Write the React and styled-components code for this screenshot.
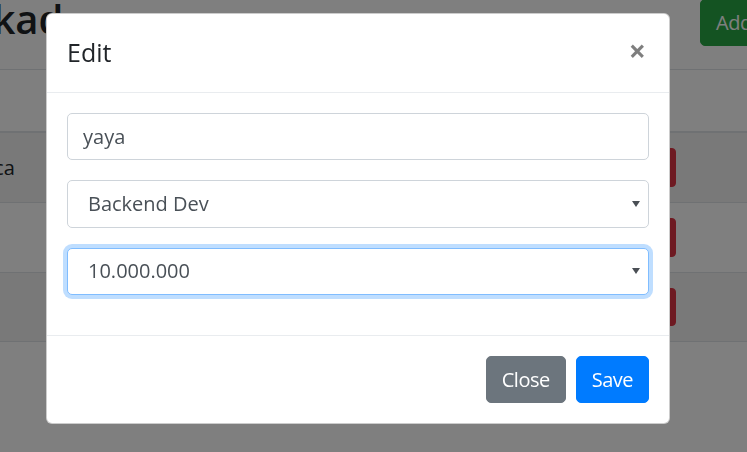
import React from 'react';
import styled, { createGlobalStyle, css } from 'styled-components';

const GlobalStyle = createGlobalStyle`
  html, body {
    margin: 0;
    padding: 0;
    background: #fff;
    overflow: hidden;
  }
  body {
    font-family: "Open Sans", "Noto Sans", "Liberation Sans", sans-serif;
    font-size: 20px;
    line-height: 1.5;
    color: #212529;
  }
  * {
    box-sizing: border-box;
  }
`;

const colors = {
  primary: '#007bff',
  secondary: '#6c757d',
  success: '#28a745',
  danger: '#dc3545',
  warning: '#ffc107',
};

const employees = [
  { name: 'Angelica', job: 'Frontend Dev', salary: '8.000.000' },
  { name: 'yaya', job: 'Backend Dev', salary: '10.000.000' },
  { name: 'budi', job: 'UI Designer', salary: '7.500.000' },
];

export default function App() {
  return (
    <>
      <GlobalStyle />
      <Page>
        <TopBar>
          <Heading>Data Akad</Heading>
          <Button $variant="success" $top>Add Data</Button>
        </TopBar>
        <Table>
          <Row $head>
            <HeadCell>Nama</HeadCell>
            <HeadCell>Jabatan</HeadCell>
            <HeadCell>Gaji</HeadCell>
            <HeadCell>Aksi</HeadCell>
            <HeadCell />
          </Row>
          {employees.map((emp, idx) => (
            <Row key={idx} $striped={idx % 2 === 0}>
              <Cell>{emp.name}</Cell>
              <Cell>{emp.job}</Cell>
              <Cell>{emp.salary}</Cell>
              <ActionCell>
                <Button $variant="warning" $small>Edit</Button>
                <Button $variant="danger" $small>Delete</Button>
              </ActionCell>
              <Cell />
            </Row>
          ))}
        </Table>
      </Page>

      <Backdrop />
      <Modal>
        <ModalHeader>
          <ModalTitle>Edit</ModalTitle>
          <CloseButton type="button">×</CloseButton>
        </ModalHeader>
        <ModalBody>
          <FormGroup>
            <Input type="text" defaultValue="yaya" />
          </FormGroup>
          <FormGroup>
            <SelectWrap>
              <Select defaultValue="Backend Dev">
                <option>Frontend Dev</option>
                <option>Backend Dev</option>
                <option>UI Designer</option>
              </Select>
            </SelectWrap>
          </FormGroup>
          <FormGroup>
            <SelectWrap>
              <Select defaultValue="10.000.000" $focused>
                <option>7.500.000</option>
                <option>8.000.000</option>
                <option>10.000.000</option>
              </Select>
            </SelectWrap>
          </FormGroup>
        </ModalBody>
        <ModalFooter>
          <Button $variant="secondary">Close</Button>
          <Button $variant="primary">Save</Button>
        </ModalFooter>
      </Modal>
    </>
  );
}

const Page = styled.div`
  height: 452px;
  overflow: hidden;
`

const TopBar = styled.div`
  display: grid;
  grid-template-columns: 700px auto;
  align-items: start;
  height: 69px;
  overflow: hidden;
`

const Heading = styled.h1`
  margin: -5px 0 0 -136px;
  font-size: 40px;
  font-weight: 600;
  line-height: 48px;
  white-space: nowrap;
`

const Button = styled.button`
  display: inline-block;
  font-family: inherit;
  font-weight: 400;
  letter-spacing: -0.5px;
  color: ${p => (p.$variant === 'warning' ? '#212529' : '#fff')};
  background: ${p => colors[p.$variant]};
  border: 1px solid ${p => colors[p.$variant]};
  white-space: nowrap;
  ${p => p.$small ? css`
    padding: 5px 10px;
    font-size: 17.5px;
    line-height: 1.5;
    border-radius: 4px;
  ` : css`
    padding: 7.5px 15px;
    font-size: 20px;
    line-height: 1.5;
    border-radius: 5px;
  `}
  ${p => p.$top && css`
    margin-top: -1px;
  `}
`

const Table = styled.div`
  margin-left: -78px;
  width: 900px;
  border-top: 1px solid #dee2e6;
`

const Row = styled.div`
  display: grid;
  grid-template-columns: 208px 250px 200px 111px 1fr;
  align-items: center;
  height: ${p => (p.$head ? '62px' : '70px')};
  border-top: ${p => (p.$head ? 'none' : '1px solid #dee2e6')};
  border-bottom: ${p => (p.$head ? '1px solid #dee2e6' : 'none')};
  background: ${p => (p.$striped ? 'rgba(0, 0, 0, 0.05)' : 'transparent')};
  &:last-child {
    border-bottom: 1px solid #dee2e6;
  }
`

const Cell = styled.div`
  padding: 0 15px;
  white-space: nowrap;
`

const HeadCell = styled(Cell)`
  font-weight: 700;
`

const ActionCell = styled(Cell)`
  display: flex;
  justify-content: flex-end;
  gap: 5px;
`

const Backdrop = styled.div`
  position: fixed;
  inset: 0;
  background: rgba(0, 0, 0, 0.5);
`

const Modal = styled.div`
  position: fixed;
  top: 13px;
  left: 46px;
  width: 624px;
  display: flex;
  flex-direction: column;
  background: #fff;
  border: 1px solid rgba(0, 0, 0, 0.2);
  border-radius: 6px;
`

const ModalHeader = styled.div`
  display: flex;
  align-items: flex-start;
  justify-content: space-between;
  padding: 20px;
  border-bottom: 1px solid #e9ecef;
`

const ModalTitle = styled.h5`
  margin: 0;
  font-size: 25px;
  font-weight: 500;
  line-height: 1.5;
  color: #212529;
`

const CloseButton = styled.button`
  padding: 20px;
  margin: -18px -17px -22px auto;
  background: transparent;
  border: 0;
  font-family: inherit;
  font-size: 30px;
  font-weight: 700;
  line-height: 1;
  color: #000;
  opacity: 0.5;
`

const ModalBody = styled.div`
  padding: 20px;
`

const FormGroup = styled.div`
  margin-bottom: 20px;
`

const controlBase = css`
  display: block;
  width: 100%;
  height: 47.5px;
  padding: 7.5px 15px;
  font-family: inherit;
  font-size: 20px;
  line-height: 1.5;
  color: #495057;
  background: #fff;
  border: 1px solid #ced4da;
  border-radius: 5px;
  outline: none;
`

const Input = styled.input`
  ${controlBase}
`

const SelectWrap = styled.div`
  position: relative;

  &::after {
    content: '';
    position: absolute;
    right: 9px;
    top: calc(50% - 3px);
    border-left: 4px solid transparent;
    border-right: 4px solid transparent;
    border-top: 6px solid #4a4f55;
    pointer-events: none;
  }
`

const Select = styled.select`
  ${controlBase}
  appearance: none;
  padding-left: 20px;
  ${p => p.$focused && css`
    border-color: #80bdff;
    box-shadow: 0 0 0 4px rgba(0, 123, 255, 0.25);
  `}
`

const ModalFooter = styled.div`
  display: flex;
  align-items: center;
  justify-content: flex-end;
  gap: 10px;
  padding: 20px;
  border-top: 1px solid #e9ecef;
`
